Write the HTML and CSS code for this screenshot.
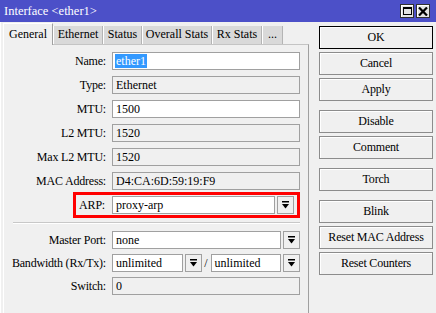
FILE: index.html
```html
<!DOCTYPE html>
<html>
<head>
<meta charset="utf-8">
<title>Interface &lt;ether1&gt;</title>
<link rel="stylesheet" href="styles.css">
</head>
<body>
<div class="win">
	<div class="titlebar">
		<span class="title">Interface &lt;ether1&gt;</span>
		<div class="wbtns">
			<span class="wbtn"><span class="max-icon"></span></span>
			<span class="wbtn">
				<svg width="10" height="9" viewBox="0 0 10 9"><path d="M1 0.5 L9 8.5 M9 0.5 L1 8.5" stroke="#000" stroke-width="2.2"/></svg>
			</span>
		</div>
	</div>
	<div class="body">
		<div class="main">
			<div class="tabs">
				<div class="tab active w-general">General</div>
				<div class="tab w-ethernet">Ethernet</div>
				<div class="tab w-status">Status</div>
				<div class="tab w-overall">Overall Stats</div>
				<div class="tab w-rx">Rx Stats</div>
				<div class="tab w-more">...</div>
			</div>
			<div class="panel">
				<div class="row">
					<label>Name:</label>
					<div class="field edit"><span class="sel">ether1</span></div>
				</div>
				<div class="row">
					<label>Type:</label>
					<div class="field">Ethernet</div>
				</div>
				<div class="row">
					<label>MTU:</label>
					<div class="field edit">1500</div>
				</div>
				<div class="row">
					<label>L2 MTU:</label>
					<div class="field">1520</div>
				</div>
				<div class="row">
					<label>Max L2 MTU:</label>
					<div class="field">1520</div>
				</div>
				<div class="row">
					<label>MAC Address:</label>
					<div class="field">D4:CA:6D:59:19:F9</div>
				</div>
				<div class="row arp">
					<label>ARP:</label>
					<div class="field edit">proxy-arp</div>
					<span class="drop"><svg width="7" height="8" viewBox="0 0 7 8"><rect x="0" y="0" width="7" height="1.5" fill="#000"/><path d="M0 3 H7 L3.5 7.5 Z" fill="#000"/></svg></span>
				</div>
				<div class="sep"></div>
				<div class="row tight">
					<label>Master Port:</label>
					<div class="field edit">none</div>
					<span class="drop"><svg width="7" height="8" viewBox="0 0 7 8"><rect x="0" y="0" width="7" height="1.5" fill="#000"/><path d="M0 3 H7 L3.5 7.5 Z" fill="#000"/></svg></span>
				</div>
				<div class="row tight">
					<label>Bandwidth (Rx/Tx):</label>
					<div class="field edit">unlimited</div>
					<span class="drop"><svg width="7" height="8" viewBox="0 0 7 8"><rect x="0" y="0" width="7" height="1.5" fill="#000"/><path d="M0 3 H7 L3.5 7.5 Z" fill="#000"/></svg></span>
					<span class="slash">/</span>
					<div class="field edit">unlimited</div>
					<span class="drop"><svg width="7" height="8" viewBox="0 0 7 8"><rect x="0" y="0" width="7" height="1.5" fill="#000"/><path d="M0 3 H7 L3.5 7.5 Z" fill="#000"/></svg></span>
				</div>
				<div class="row tight">
					<label>Switch:</label>
					<div class="field">0</div>
				</div>
			</div>
		</div>
		<div class="side">
			<button class="btn default">OK</button>
			<button class="btn">Cancel</button>
			<button class="btn">Apply</button>
			<button class="btn gap">Disable</button>
			<button class="btn">Comment</button>
			<button class="btn gap">Torch</button>
			<button class="btn gap">Blink</button>
			<button class="btn">Reset MAC Address</button>
			<button class="btn">Reset Counters</button>
		</div>
	</div>
</div>
</body>
</html>
```

FILE: styles.css
```css
*{margin:0;padding:0;box-sizing:border-box;}
body{width:436px;height:313px;overflow:hidden;font-family:"Liberation Serif","Times New Roman",serif;font-size:12px;color:#000;background:#f0f0f0;}

.win{width:436px;height:313px;background:#f0f0f0;}

/* title bar */
.titlebar{
	display:flex;
	align-items:center;
	justify-content:space-between;
	height:22px;
	padding:0 6px 0 4px;
	background:#4c50c8;
	color:#fff;
	font-size:12.5px;
}
.wbtns{display:flex;gap:2px;}
.wbtn{
	display:flex;
	align-items:center;
	justify-content:center;
	width:14px;
	height:14px;
	background:#e4e4e4;
	border:1px solid #303030;
	box-shadow:inset 1px 1px 0 #fff;
}
.max-icon{width:9px;height:8px;border:1px solid #000;border-top-width:2px;}

.body{display:flex;height:291px;border-left:1px solid #fff;}

/* tabs + panel */
.main{width:306px;margin-left:2px;display:flex;flex-direction:column;}
.tabs{display:flex;align-items:flex-end;height:22px;}
.tab{
	height:18px;
	line-height:17px;
	text-align:center;
	background:#d9d9d9;
	border-left:1px solid #fff;
	border-right:1px solid #b4b4b4;
	white-space:nowrap;
}
.tab.active{
	height:22px;
	line-height:20px;
	margin-bottom:-1px;
	background:#f0f0f0;
	border-top:1px solid #fff;
	border-right:1px solid #a0a0a0;
	position:relative;
}
.w-general{width:50px;}
.w-ethernet{width:50px;}
.w-status{width:39px;}
.w-overall{width:70px;}
.w-rx{width:50px;}
.w-more{width:21px;}

.panel{
	flex:1;
	padding:7px 8px 0 0;
	border-top:1px solid #c4c4c4;
	border-right:1px solid #a0a0a0;
	border-left:1px solid #fff;
}

.row{display:flex;align-items:center;height:18px;margin-bottom:6px;}
.row label{width:102px;flex:none;margin-right:6px;text-align:right;white-space:nowrap;letter-spacing:-0.2px;}
.row.tight{margin-bottom:5px;}

.field{
	flex:1;
	min-width:0;
	height:18px;
	line-height:16px;
	padding:0 3px;
	border:1px solid #a0a0a0;
	background:#f0f0f0;
	white-space:nowrap;
	overflow:hidden;
}
.field.edit{background:#fff;}
.sel{background:#3399ff;color:#fff;padding:0 1px;margin-left:-1px;}

.drop{
	display:flex;
	align-items:center;
	justify-content:center;
	flex:none;
	width:17px;
	height:18px;
	margin-left:2px;
	border:1px solid #a0a0a0;
	background:#f0f0f0;
}
.slash{width:9px;text-align:center;flex:none;}

.arp{
	height:26px;
	margin:-4px 0 4px 69px;
	padding:1px 3px 1px 0;
	border:3px solid #f00;
}
.arp label{width:29px;margin-right:7px;}

.sep{
	height:2px;
	margin:0 0 7px 9px;
	border-top:1px solid #c8c8c8;
	border-bottom:1px solid #fff;
}

/* right buttons */
.side{display:flex;flex-direction:column;width:114px;margin-left:10px;padding-top:4px;}
.btn{
	height:23px;
	margin-bottom:3px;
	font-family:inherit;
	font-size:12px;
	letter-spacing:-0.2px;
	background:#f0f0f0;
	border:1px solid #8c8c8c;
	box-shadow:inset 1px 1px 0 #fff;
	color:#000;
}
.btn.default{border-color:#000;}
.btn.gap{margin-top:6px;}
```
